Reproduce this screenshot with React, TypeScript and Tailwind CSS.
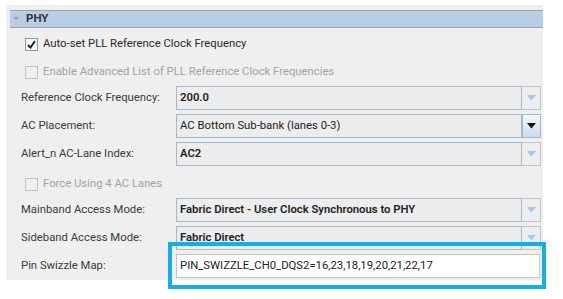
import React from "react";

const Arrow = ({ active }: { active?: boolean }) => (
  <svg width="9" height="6" viewBox="0 0 9 6">
    <path d="M0 0 L9 0 L4.5 5.5 Z" fill={active ? "#111111" : "#a9c6e4"} />
  </svg>
);

const Select = ({
  value,
  bold,
  active,
}: {
  value: string;
  bold?: boolean;
  active?: boolean;
}) => (
  <div className="flex h-[24px] w-[365px] shrink-0">
    <div
      className={`flex flex-1 items-center whitespace-nowrap border border-[#a3b9cf] bg-[#ededed] pl-[3px] text-[11.3px] text-[#222] ${
        bold ? "font-semibold" : ""
      }`}
    >
      {value}
    </div>
    <div
      className={`flex w-[19px] items-center justify-center border ${
        active
          ? "border-[#a3b9cf] bg-gradient-to-b from-[#f5f9fd] to-[#c8dbee]"
          : "border-[#c4c4c4] border-l-0 bg-[#eeeeee]"
      }`}
    >
      <Arrow active={active} />
    </div>
  </div>
);

const Row = ({ label, children }: { label: string; children: React.ReactNode }) => (
  <div className="flex h-[24px] items-center">
    <div className="w-[170px] shrink-0 whitespace-nowrap pl-[15px] text-[11.3px] text-[#3a3a3a]">
      {label}
    </div>
    {children}
  </div>
);

const Check = ({ label, checked, disabled }: { label: string; checked?: boolean; disabled?: boolean }) => (
  <div className="flex h-[28px] items-center pl-[19px]">
    <div
      className={`flex h-[13px] w-[13px] shrink-0 items-center justify-center border ${
        disabled ? "border-[#c2c2c2] bg-[#efefef]" : "border-[#8799ad] bg-[#f4f6f9]"
      }`}
    >
      {checked && (
        <svg width="9" height="9" viewBox="0 0 9 9">
          <path d="M1 5 L3.5 7.5 L8 1" stroke="#1a1a1a" strokeWidth="1.8" fill="none" />
        </svg>
      )}
    </div>
    <span
      className={`ml-[5px] whitespace-nowrap text-[11.3px] ${
        disabled ? "text-[#a3a3a3]" : "text-[#2a2a2a]"
      }`}
    >
      {label}
    </span>
  </div>
);

export default function App() {
  return (
    <div
      className="relative h-[299px] w-[563px] bg-white pt-[5px] pl-[6px]"
      style={{ fontFamily: "Roboto, 'Liberation Sans', sans-serif" }}
    >
      <div className="flex h-[275px] w-[537px] flex-col bg-[#efefef] pt-[5px] pl-[4px]">
        <div className="flex h-[18px] items-center border-y border-[#a3a3a3] bg-[#b8cee6] pl-[3px]">
          <svg width="6" height="4" viewBox="0 0 6 4">
            <path d="M0 0 L6 0 L3 3.5 Z" fill="#a5a5a5" />
          </svg>
          <span className="ml-[7px] text-[11.5px] font-bold text-[#333]">PHY</span>
        </div>
        <div className="-ml-[4px] flex flex-col pt-[2px]">
          <Check label="Auto-set PLL Reference Clock Frequency" checked />
          <Check label="Enable Advanced List of PLL Reference Clock Frequencies" disabled />
          <div className="flex flex-col gap-[4px]">
            <Row label="Reference Clock Frequency:">
              <Select value="200.0" bold />
            </Row>
            <Row label="AC Placement:">
              <Select value="AC Bottom Sub-bank (lanes 0-3)" active />
            </Row>
            <Row label="Alert_n AC-Lane Index:">
              <Select value="AC2" bold />
            </Row>
          </div>
          <div className="mt-[4px]">
            <Check label="Force Using 4 AC Lanes" disabled />
          </div>
          <div className="flex flex-col gap-[4px]">
            <Row label="Mainband Access Mode:">
              <Select value="Fabric Direct - User Clock Synchronous to PHY" bold />
            </Row>
            <Row label="Sideband Access Mode:">
              <Select value="Fabric Direct" bold />
            </Row>
            <Row label="Pin Swizzle Map:">
              <div className="flex h-[24px] w-[364px] shrink-0 items-center whitespace-nowrap border border-[#c4c4c4] bg-white pl-[3px] text-[11.3px] text-[#222]">
                PIN_SWIZZLE_CH0_DQS2=16,23,18,19,20,21,22,17
              </div>
            </Row>
          </div>
        </div>
      </div>
      <div className="absolute left-[168px] top-[242px] h-[47px] w-[378px] border-4 border-[#12adeb]" />
    </div>
  );
}
